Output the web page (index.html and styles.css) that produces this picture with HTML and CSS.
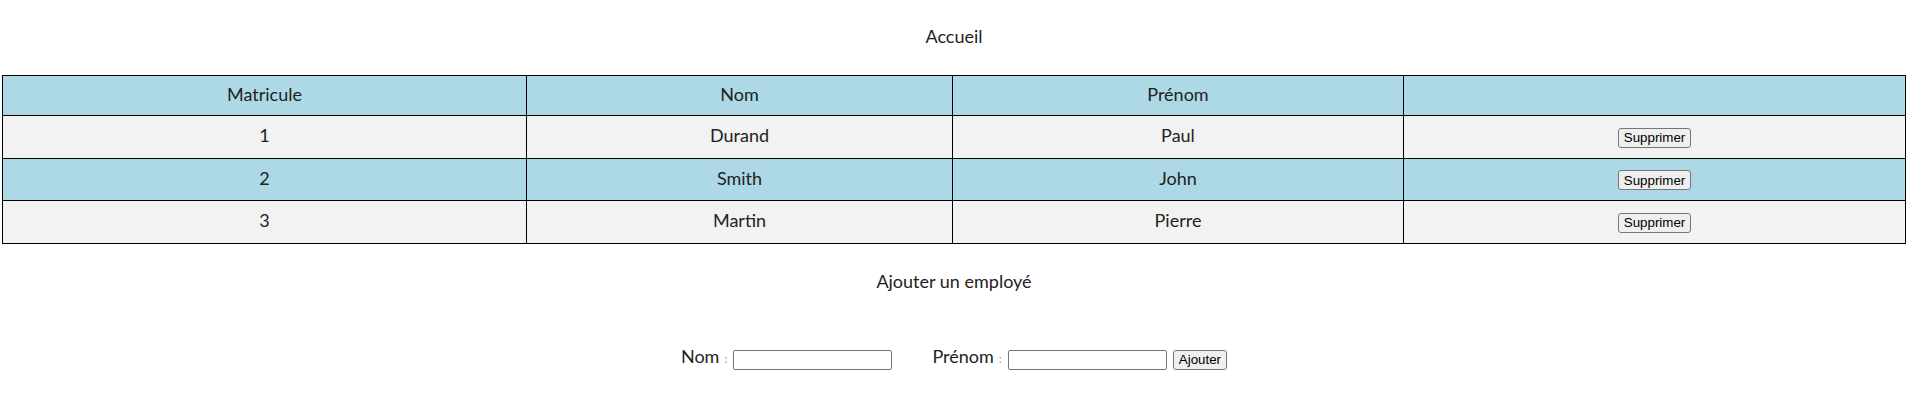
FILE: index.html
```html
<html>
    <head>
        <title>Accueil</title>
        <link rel="stylesheet" href="styles.css">
    </head>
    <body>

        <h1 class="page-title">Accueil</h1>

        <table class="employees">
            <thead>
                <tr>
                    <th class="col-matricule">Matricule</th>
                    <th class="col-nom">Nom</th>
                    <th class="col-prenom">Prénom</th>
                    <th class="col-action"></th>
                </tr>
            </thead>
            <tbody id="employeeRows">
                <tr>
                    <td>1</td>
                    <td>Durand</td>
                    <td>Paul</td>
                    <td><button class="delete-btn">Supprimer</button></td>
                </tr>
                <tr>
                    <td>2</td>
                    <td>Smith</td>
                    <td>John</td>
                    <td><button class="delete-btn">Supprimer</button></td>
                </tr>
                <tr>
                    <td>3</td>
                    <td>Martin</td>
                    <td>Pierre</td>
                    <td><button class="delete-btn">Supprimer</button></td>
                </tr>
            </tbody>
        </table>

        <h2 class="form-title">Ajouter un employé</h2>

        <form class="add-form" id="addForm">
            <label class="field-label" for="nom">Nom<span class="colon">:</span></label>
            <input class="field-input" type="text" id="nom">
            <label class="field-label second" for="prenom">Prénom<span class="colon">:</span></label>
            <input class="field-input" type="text" id="prenom">
            <button class="add-btn" type="submit">Ajouter</button>
        </form>

    </body>
</html>
```

FILE: styles.css
```css
body {
    font-family: Lato, "Open Sans", sans-serif;
    font-weight: 400;
    font-size: 18px;
    color: #222;
    background-color: white;
    margin: 0;
    padding: 0 8px 0 2px;
}

.page-title {
    font-size: 18px;
    font-weight: 400;
    line-height: 22px;
    text-align: center;
    margin: 0;
    padding-top: 25px;
}

.employees {
    width: 1904px;
    margin-top: 28px;
    table-layout: fixed;
    border-collapse: separate;
    border-spacing: 0;
    border-top: 1px solid black;
    border-left: 1px solid black;
    box-sizing: border-box;
    font-family: Lato, "Open Sans", sans-serif;
}

.employees th,
.employees td {
    box-sizing: border-box;
    border-right: 1px solid black;
    border-bottom: 1px solid black;
    text-align: center;
    vertical-align: baseline;
    font-size: 18px;
    line-height: 22px;
    font-weight: 400;
    color: #222;
}

.employees th {
    background-color: lightblue;
    padding: 7px 0 10px;
}

.employees td {
    padding: 8px 0 10px;
}

.employees tbody tr:nth-child(odd) {
    background-color: #f2f2f2;
}

.employees tbody tr:nth-child(even) {
    background-color: lightblue;
}

.col-matricule { width: 524px; }
.col-nom { width: 426px; }
.col-prenom { width: 451px; }
.col-action { width: 502px; }

.delete-btn,
.add-btn {
    font-family: "Liberation Sans", Arial, sans-serif;
    font-size: 13.33px;
    color: black;
    background-color: #efefef;
    border: 1px solid #767676;
    border-radius: 3px;
    padding: 0 5px;
    height: 20px;
    cursor: pointer;
}

.delete-btn:hover,
.add-btn:hover {
    background-color: #e5e5e5;
}

.form-title {
    font-size: 18px;
    font-weight: 400;
    line-height: 22px;
    text-align: center;
    margin: 26px 0 0;
}

.add-form {
    display: flex;
    justify-content: center;
    align-items: flex-start;
    margin: 53px 0 0;
}

.field-label {
    line-height: 22px;
}

.field-label.second {
    margin-left: 40px;
}

.colon {
    font-size: 12px;
    color: #999;
    margin: 0 6px 0 5px;
}

.field-input {
    box-sizing: border-box;
    width: 159px;
    height: 20px;
    margin-top: 5px;
    padding: 1px 2px;
    border: 1px solid #767676;
    border-radius: 2px;
    font-family: "Liberation Sans", Arial, sans-serif;
    font-size: 13.33px;
}

.add-btn {
    margin-top: 5px;
    margin-left: 6px;
}
```
